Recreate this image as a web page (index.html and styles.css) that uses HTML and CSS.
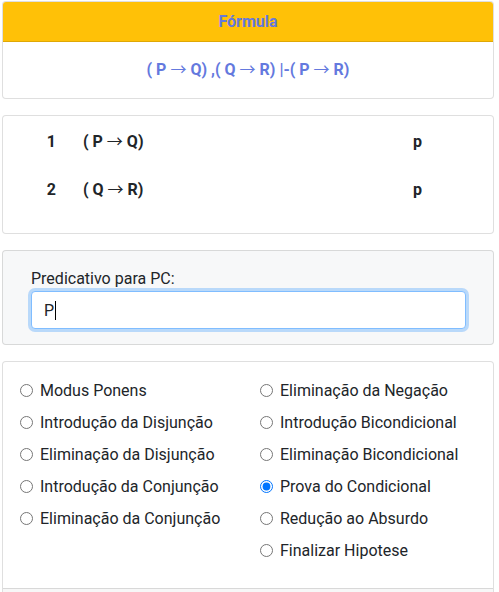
FILE: index.html
```html
<!DOCTYPE html>
<html lang="pt">
<head>
<meta charset="utf-8">
<link rel="stylesheet" href="styles.css">
</head>
<body>
<div class="page">
  <section class="card">
    <header class="card-header">Fórmula</header>
    <div class="formula">( P <span class="arr">→</span> Q) ,( Q <span class="arr">→</span> R) |-( P <span class="arr">→</span> R)</div>
  </section>

  <section class="card proof">
    <div class="line"><span class="num">1</span><span class="expr">( P <span class="arr">→</span> Q)</span><span class="rule">p</span></div>
    <div class="line"><span class="num">2</span><span class="expr">( Q <span class="arr">→</span> R)</span><span class="rule">p</span></div>
  </section>

  <section class="card light">
    <label class="label" for="pred">Predicativo para PC:</label>
    <div class="input">P<span class="caret"></span></div>
  </section>

  <section class="card rules">
    <div class="cols">
      <div class="col">
        <label class="opt"><input type="radio" name="r"><span>Modus Ponens</span></label>
        <label class="opt"><input type="radio" name="r"><span>Introdução da Disjunção</span></label>
        <label class="opt"><input type="radio" name="r"><span>Eliminação da Disjunção</span></label>
        <label class="opt"><input type="radio" name="r"><span>Introdução da Conjunção</span></label>
        <label class="opt"><input type="radio" name="r"><span>Eliminação da Conjunção</span></label>
      </div>
      <div class="col">
        <label class="opt"><input type="radio" name="r"><span>Eliminação da Negação</span></label>
        <label class="opt"><input type="radio" name="r"><span>Introdução Bicondicional</span></label>
        <label class="opt"><input type="radio" name="r"><span>Eliminação Bicondicional</span></label>
        <label class="opt"><input type="radio" name="r" checked><span>Prova do Condicional</span></label>
        <label class="opt"><input type="radio" name="r"><span>Redução ao Absurdo</span></label>
        <label class="opt"><input type="radio" name="r"><span>Finalizar Hipotese</span></label>
      </div>
    </div>
    <div class="card-footer"></div>
  </section>
</div>
</body>
</html>
```

FILE: styles.css
```css
html, body {
  margin: 0;
  padding: 0;
  background: #fff;
}
body {
  font-family: Roboto, "Liberation Sans", sans-serif;
  color: #212529;
  font-size: 16px;
}
.page {
  padding: 1px 5px 0 2px;
  display: flex;
  flex-direction: column;
  gap: 16px;
}
.card {
  border: 1px solid rgba(0,0,0,.125);
  border-radius: 4px;
  background: #fff;
  overflow: hidden;
}
.card-header {
  background: #ffc107;
  border-bottom: 1px solid rgba(0,0,0,.125);
  color: #6479de;
  font-weight: 700;
  font-size: 16px;
  text-align: center;
  height: 39px;
  line-height: 39px;
}
.formula {
  color: #6479de;
  font-weight: 700;
  font-size: 16px;
  text-align: center;
  padding: 19px 0 19px;
  line-height: 18px;
  height: 18px;
}
.arr {
  font-family: "Noto Sans CJK JP", "DejaVu Sans", sans-serif;
  font-weight: 400;
  line-height: 0;
}
.proof {
  padding: 2px 0 19px;
}
.line {
  display: grid;
  grid-template-columns: 45px 365px 1fr;
  height: 48px;
  align-items: center;
  font-weight: 700;
  font-size: 16px;
  line-height: 20px;
}
.num { text-align: right; margin-right: -8px; }
.expr { padding-left: 35px; }
.light {
  background: #f7f8f9;
  padding: 18px 27px 15px 28px;
  display: flex;
  flex-direction: column;
}
.label {
  font-size: 16px;
  line-height: 20px;
  margin-bottom: 2px;
}
.input {
  height: 36px;
  border: 1px solid #80bdff;
  border-radius: 4px;
  background: #fff;
  box-shadow: 0 0 0 3px rgba(0,123,255,.25);
  padding: 0 12px;
  font-size: 16px;
  display: flex;
  align-items: center;
}
.caret {
  display: inline-block;
  width: 1px;
  height: 19px;
  background: #000;
  margin-left: 1px;
}
.cols {
  display: grid;
  grid-template-columns: 240px 1fr;
  padding: 12px 0 22px 12px;
}
.col {
  display: flex;
  flex-direction: column;
}
.opt {
  display: flex;
  align-items: center;
  height: 32px;
  font-size: 16px;
  color: #212529;
}
.opt input {
  margin: 0 7px 0 5px;
  width: 13px;
  height: 13px;
}
.card-footer {
  height: 20px;
  border-top: 1px solid rgba(0,0,0,.125);
  background: rgba(0,0,0,.03);
}
```
